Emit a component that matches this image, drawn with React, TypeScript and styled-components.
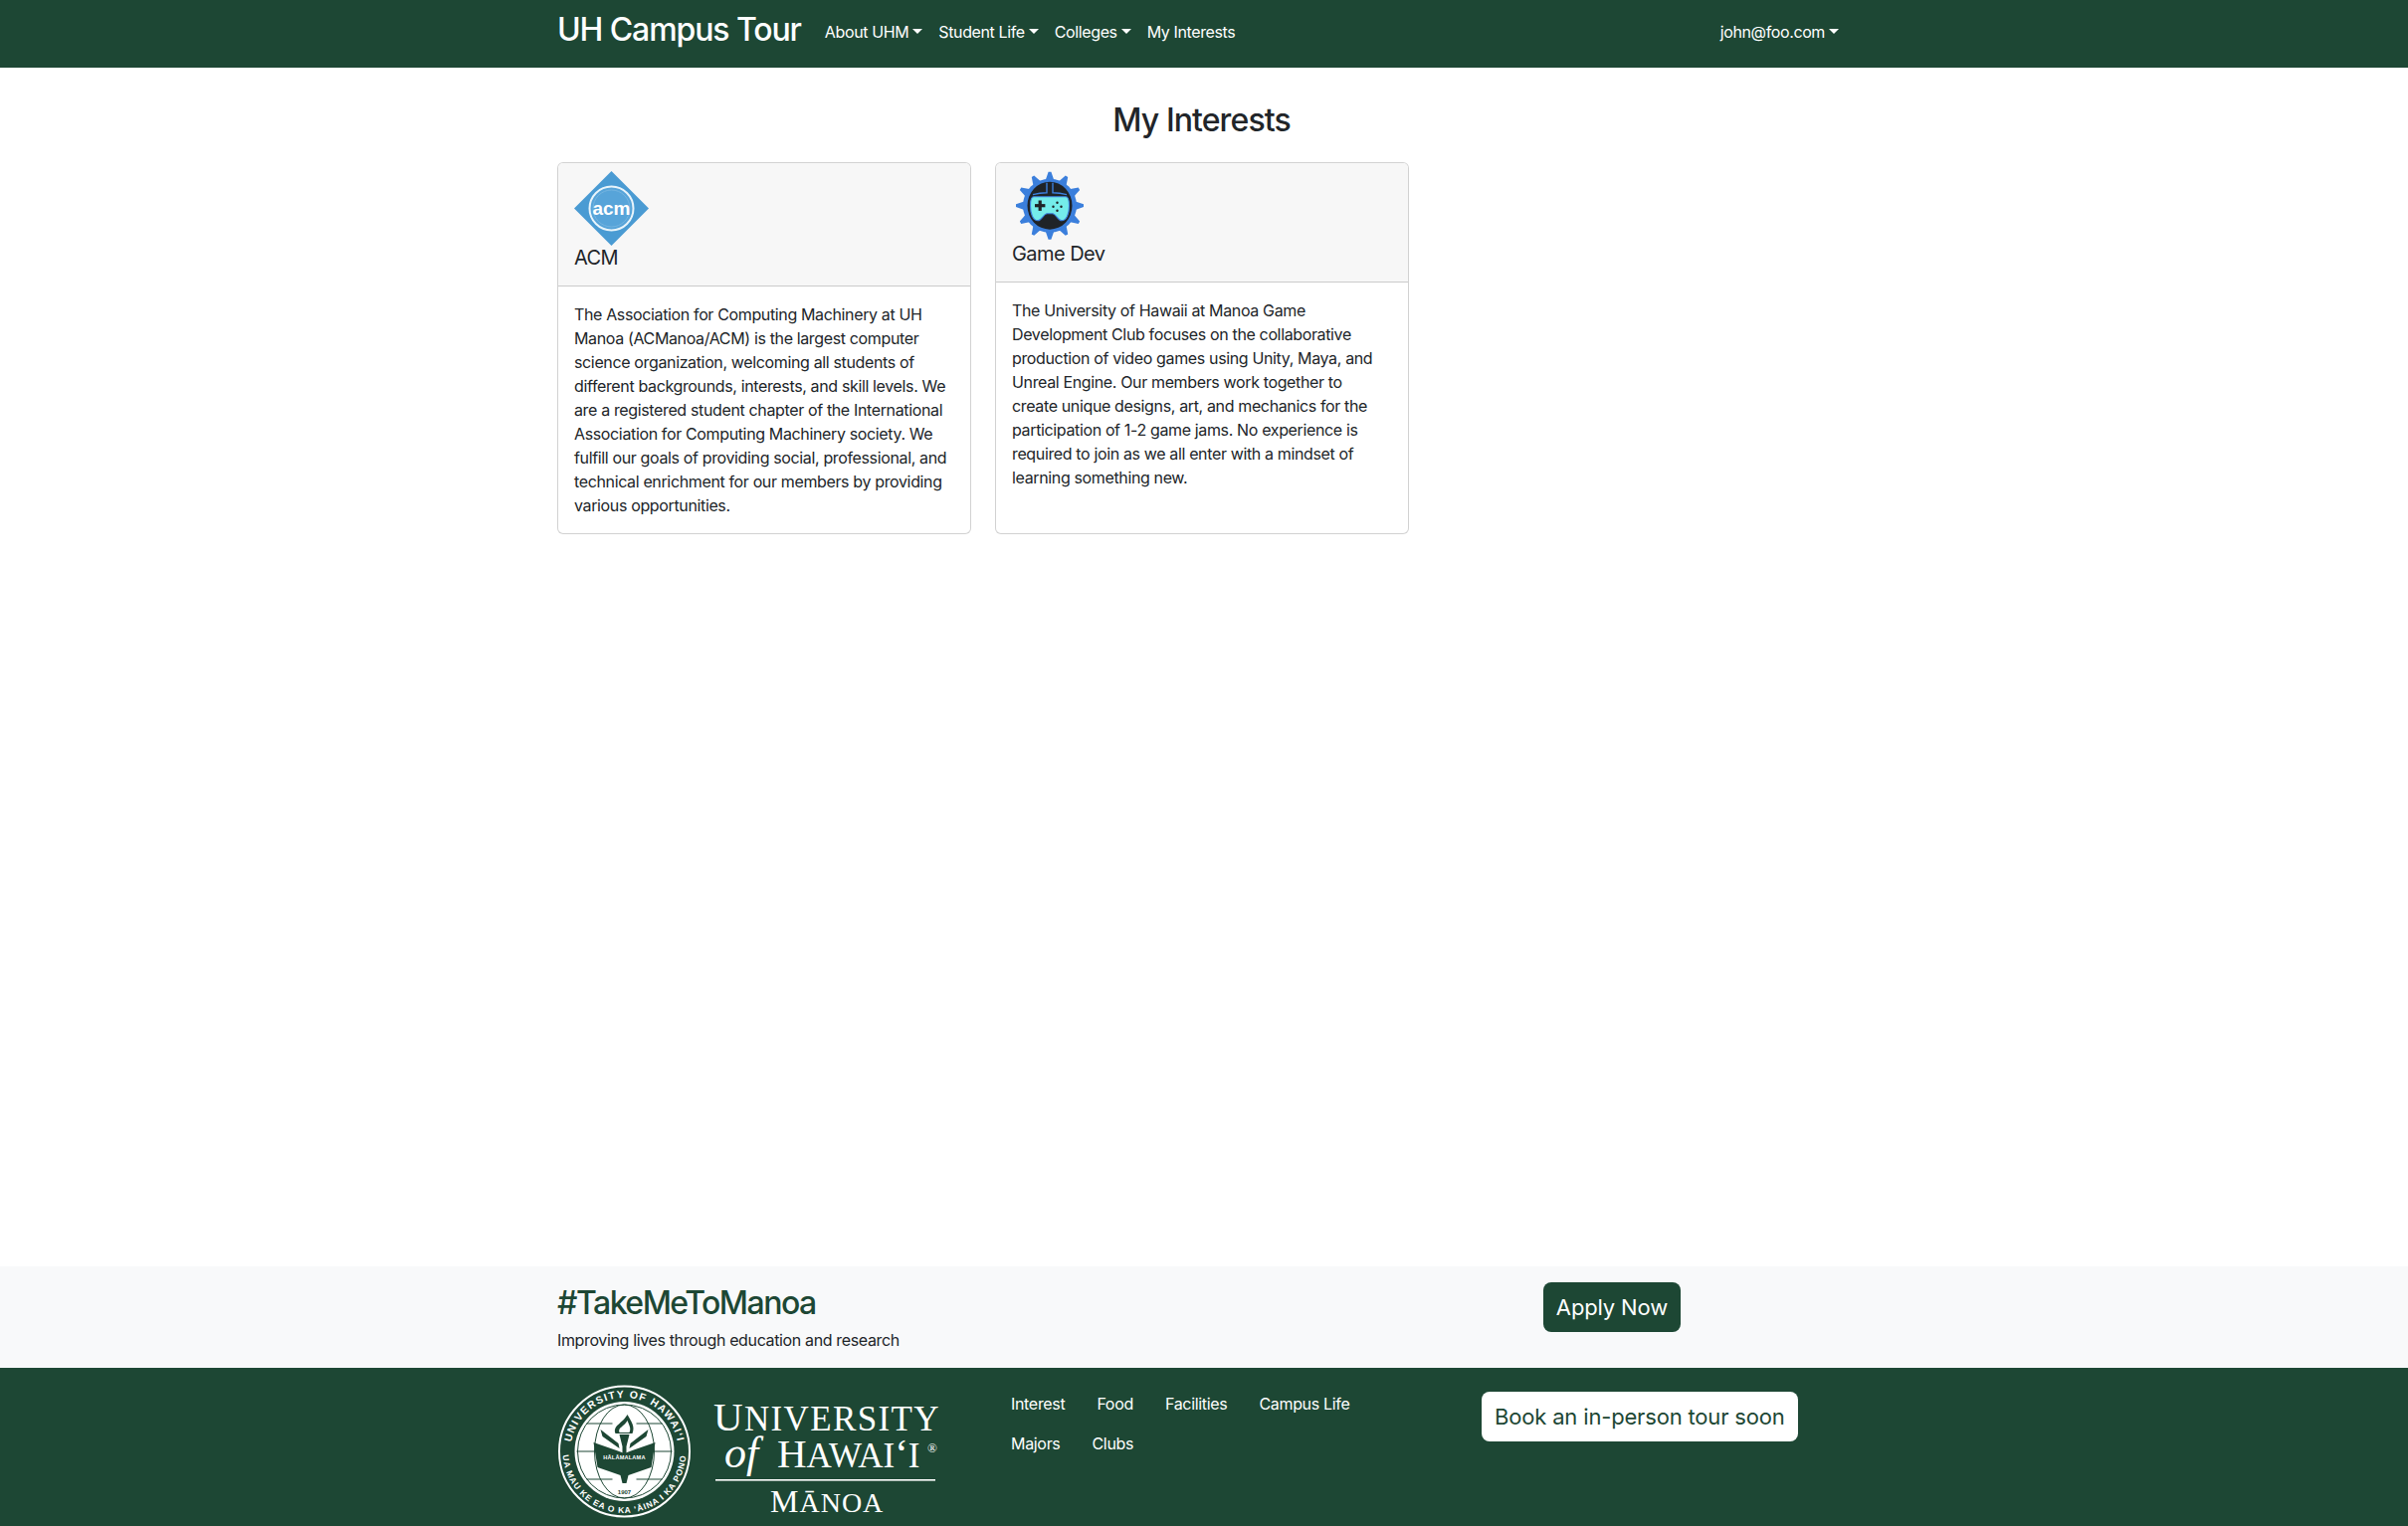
import React from 'react';
import styled, { createGlobalStyle } from 'styled-components';

const GREEN = '#1d4734';

const Global = createGlobalStyle`
  html, body { margin: 0; padding: 0; }
  body { font-family: Inter, "Liberation Sans", sans-serif; font-size: 16px; line-height: 24px; color: #212529; background: #fff; }
  * { box-sizing: border-box; }
`;

const Page = styled.div`
  min-height: 100vh;
  height: 1534px;
  overflow: hidden;
  display: flex;
  flex-direction: column;
`;

const Container = styled.div`
  width: 1320px;
  margin: 0 auto;
  padding: 0 10px;
`;

const Navbar = styled.nav`
  background: ${GREEN};
  height: 68px;
  flex: none;
`;

const NavInner = styled(Container)`
  display: flex;
  align-items: flex-start;
`;

const Brand = styled.a`
  font-size: 32px;
  line-height: 38px;
  margin-top: 11px;
  font-weight: 500;
  letter-spacing: -1.1px;
  color: #fff;
  margin-right: 16px;
  white-space: nowrap;
`;

const NavList = styled.div`
  display: flex;
  flex: 1;
  padding-top: 20px;
  padding-right: 4px;
`;

const NavLink = styled.a<{ $push?: boolean }>`
  display: inline-flex;
  align-items: center;
  font-size: 16px;
  line-height: 24px;
  letter-spacing: -0.38px;
  color: #fff;
  padding: 0 8px;
  white-space: nowrap;
  margin-left: ${(p) => (p.$push ? 'auto' : '0')};
`;

const Caret = styled.span`
  display: inline-block;
  margin-left: 4px;
  margin-bottom: 2px;
  border-top: 5px solid #fff;
  border-left: 5px solid transparent;
  border-right: 5px solid transparent;
`;

const Main = styled.main`
  flex: 1;
`;

const Heading = styled.h2`
  margin: 0 5px 0 0;
  padding-top: 34px;
  height: 95px;
  text-align: center;
  font-size: 32px;
  line-height: 38px;
  font-weight: 500;
  letter-spacing: -0.9px;
  color: #212529;
`;

const CardGrid = styled.div`
  display: grid;
  grid-template-columns: 416px 416px;
  gap: 24px;
  align-items: stretch;
`;

const Card = styled.article`
  border: 1px solid rgba(0, 0, 0, 0.175);
  border-radius: 6px;
  background: #fff;
  overflow: hidden;
  height: 374px;
`;

const CardHeader = styled.header`
  background: #f7f7f7;
  border-bottom: 1px solid rgba(0, 0, 0, 0.175);
  padding: 8px 16px;
`;

const LogoBox = styled.div<{ $h: number }>`
  width: 75px;
  height: ${(p) => p.$h}px;
  svg { display: block; }
`;

const CardTitle = styled.h5`
  margin: 0 0 8px;
  font-size: 20px;
  line-height: 24px;
  font-weight: 400;
  letter-spacing: -0.55px;
  color: #212529;
`;

const CardBody = styled.p`
  margin: 0;
  padding: 16px;
  font-size: 16px;
  line-height: 24px;
  letter-spacing: -0.36px;
  white-space: nowrap;
  color: #212529;
`;

const Band = styled.section`
  background: #f8f9fa;
  height: 102px;
  flex: none;
`;

const BandInner = styled(Container)`
  display: flex;
  justify-content: space-between;
  align-items: flex-start;
`;

const BandText = styled.div`
  padding-top: 18px;
`;

const Tag = styled.h2`
  margin: 0 0 6px;
  font-size: 32px;
  line-height: 38px;
  font-weight: 500;
  letter-spacing: -1.5px;
  color: ${GREEN};
`;

const Sub = styled.p`
  margin: 0;
  font-size: 16px;
  line-height: 24px;
  letter-spacing: -0.36px;
  color: #212529;
`;

const ApplyButton = styled.a`
  display: block;
  margin-top: 16px;
  margin-right: 171px;
  height: 50px;
  padding: 0 13px;
  line-height: 50px;
  font-size: 22px;
  letter-spacing: -0.15px;
  background: ${GREEN};
  color: #fff;
  border-radius: 8px;
  white-space: nowrap;
`;

const Footer = styled.footer`
  background: ${GREEN};
  flex: none;
  height: 159px;
`;

const FooterInner = styled(Container)`
  display: flex;
  align-items: flex-start;
`;

const LogoCol = styled.div`
  width: 430px;
  padding-top: 15px;
  svg { display: block; }
`;

const LinksCol = styled.div`
  width: 440px;
  padding-top: 24px;
  padding-left: 26px;
`;

const LinkRow = styled.div`
  display: flex;
  gap: 32px;
  height: 40px;
`;

const FooterLink = styled.a`
  font-size: 16px;
  line-height: 24px;
  letter-spacing: -0.32px;
  color: #fff;
  white-space: nowrap;
`;

const TourButton = styled.a`
  display: block;
  margin-top: 24px;
  margin-left: 59px;
  height: 50px;
  padding: 0 13px;
  line-height: 51px;
  font-size: 22px;
  letter-spacing: -0.17px;
  background: #fff;
  color: ${GREEN};
  border-radius: 8px;
  white-space: nowrap;
`;

const AcmLogo = () => (
  <svg width="75" height="75" viewBox="0 0 75 75">
    <polygon points="37.5,0 75,37.5 37.5,75 0,37.5" fill="#4a9bd3" />
    <circle cx="37.5" cy="37.5" r="22" fill="#57a4d9" stroke="#e8f4fb" strokeWidth="2" />
    <circle cx="37.5" cy="37.5" r="18.5" fill="none" stroke="#74b4e0" strokeWidth="1" />
    <text x="37.5" y="43.5" textAnchor="middle" fontFamily="'Liberation Sans', sans-serif" fontWeight="700" fontSize="19" fill="#fff">acm</text>
  </svg>
);

const teeth = Array.from({ length: 12 }, (_, i) => i * 30);

const GameLogo = () => (
  <svg width="75" height="71" viewBox="0 0 75 71">
    <g transform="translate(38 34.7)">
      {teeth.map((a) => (
        <polygon key={a} points="-4.5,-25 -1.4,-34 1.4,-34 4.5,-25" fill="#3b7fdc" transform={`rotate(${a})`} />
      ))}
      <circle r="27" fill="#3b7fdc" />
      <ellipse rx="22.5" ry="24" fill="#1f2327" />
      <path d="M-17,-11 C-10,-13 -6,-13 -3,-13 V-23 M3,-23 V-13 C6,-13 10,-13 17,-11" fill="none" stroke="#3b7fdc" strokeWidth="1.4" />
      <path d="M-16,-9 H16 C19,-9 19.5,-5 19.5,0 C19.5,8 17,15 12,15 C8,15 7,9 3,8 H-3 C-7,9 -8,15 -12,15 C-17,15 -19.5,8 -19.5,0 C-19.5,-5 -19,-9 -16,-9 Z" fill="#74ecea" stroke="#3b7fdc" strokeWidth="1.1" />
      <rect x="-15" y="-1.6" width="10.4" height="3.2" fill="#1f2327" />
      <rect x="-11.4" y="-5.2" width="3.2" height="10.4" fill="#1f2327" />
      <circle cx="3.5" cy="1" r="1.2" fill="#1f2327" />
      <circle cx="7.5" cy="-3" r="1.2" fill="#1f2327" />
      <circle cx="11.5" cy="1" r="1.2" fill="#1f2327" />
      <circle cx="7.5" cy="5" r="1.2" fill="#1f2327" />
    </g>
  </svg>
);

const UhLogo = () => (
  <svg width="385" height="140" viewBox="0 0 385 140">
    <defs>
      <path id="sealTop" d="M 13.5 69 A 54 54 0 0 1 121.5 69" fill="none" />
      <path id="sealBottom" d="M 5.5 69 A 62 62 0 0 0 129.5 69" fill="none" />
    </defs>
    <circle cx="67.5" cy="69" r="65.5" fill="none" stroke="#fff" strokeWidth="2" />
    <circle cx="67.5" cy="69" r="50" fill="#fff" />
    <text fontFamily="'Liberation Sans', sans-serif" fontWeight="700" fontSize="10.5" fill="#fff" letterSpacing="1.3">
      <textPath href="#sealTop" startOffset="50%" textAnchor="middle">UNIVERSITY OF HAWAI‘I</textPath>
    </text>
    <text fontFamily="'Liberation Sans', sans-serif" fontWeight="700" fontSize="8.5" fill="#fff" letterSpacing="0.9">
      <textPath href="#sealBottom" startOffset="50%" textAnchor="middle">UA MAU KE EA O KA ‘ĀINA I KA PONO</textPath>
    </text>
    <g transform="translate(67.5 69)" fill="none" stroke={GREEN} strokeWidth="1">
      <circle r="47" />
      <ellipse rx="30" ry="47" />
      <path d="M-38,-28 H-12 M12,-28 H38 M-48,0 H-30 M30,0 H48 M-38,28 H-12 M12,28 H38" />
      <path d="M-31,-9 L-8,-1 L0,2 L8,-1 L31,-9 L27,16 L4,24 L2,32 H-2 L-4,24 L-27,16 Z" fill={GREEN} stroke="none" />
      <path d="M-24,-22 L-6,-8 L-5,-3 L-22,-15 Z M24,-22 L6,-8 L5,-3 L22,-15 Z" fill={GREEN} stroke="none" />
      <path d="M-5,-17 H5 L2,-5 V2 H-2 V-5 Z" fill={GREEN} stroke="none" />
      <path d="M-9,-18 C-12,-26 -2,-28 3,-37 C7,-30 11,-25 8,-18 Z" fill={GREEN} stroke="none" />
      <path d="M-5,-19 C-7,-24 0,-25 3,-31 C5,-26 7,-23 5,-19 Z" fill="#fff" stroke="none" />
    </g>
    <text x="67.5" y="77" textAnchor="middle" fontFamily="'Liberation Sans', sans-serif" fontWeight="700" fontSize="5.6" letterSpacing="0.2" fill="#fff">HĀLĀMALAMA</text>
    <text x="67.5" y="112" textAnchor="middle" fontFamily="'Liberation Sans', sans-serif" fontWeight="700" fontSize="6" fill={GREEN}>1907</text>
    <g fontFamily="'Liberation Serif', serif" fill="#fff">
      <text x="157" y="48" fontSize="41" letterSpacing="1.35">U<tspan fontSize="35">NIVERSITY</tspan></text>
      <text x="168" y="85" fontSize="44" fontStyle="italic">of</text>
      <text x="221" y="85" fontSize="41" letterSpacing="0">H<tspan fontSize="35">AWAI</tspan>ʻ<tspan fontSize="35">I</tspan></text>
      <text x="372" y="70" fontSize="13">®</text>
      <text x="214" y="130" fontSize="32" letterSpacing="1">M<tspan fontSize="28">ĀNOA</tspan></text>
    </g>
    <rect x="159" y="97" width="221" height="1.6" fill="#fff" />
  </svg>
);

const acmLines = [
  'The Association for Computing Machinery at UH',
  'Manoa (ACManoa/ACM) is the largest computer',
  'science organization, welcoming all students of',
  'different backgrounds, interests, and skill levels. We',
  'are a registered student chapter of the International',
  'Association for Computing Machinery society. We',
  'fulfill our goals of providing social, professional, and',
  'technical enrichment for our members by providing',
  'various opportunities.',
];

const gameLines = [
  'The University of Hawaii at Manoa Game',
  'Development Club focuses on the collaborative',
  'production of video games using Unity, Maya, and',
  'Unreal Engine. Our members work together to',
  'create unique designs, art, and mechanics for the',
  'participation of 1-2 game jams. No experience is',
  'required to join as we all enter with a mindset of',
  'learning something new.',
];

const Lines = ({ lines }: { lines: string[] }) => (
  <>
    {lines.map((l) => (
      <React.Fragment key={l}>
        {l}
        <br />
      </React.Fragment>
    ))}
  </>
);

export default function App() {
  return (
    <Page>
      <Global />
      <Navbar>
        <NavInner>
          <Brand>UH Campus Tour</Brand>
          <NavList>
            <NavLink>About UHM<Caret /></NavLink>
            <NavLink>Student Life<Caret /></NavLink>
            <NavLink>Colleges<Caret /></NavLink>
            <NavLink>My Interests</NavLink>
            <NavLink $push>john@foo.com<Caret /></NavLink>
          </NavList>
        </NavInner>
      </Navbar>
      <Main>
        <Container>
          <Heading>My Interests</Heading>
          <CardGrid>
            <Card>
              <CardHeader>
                <LogoBox $h={75}><AcmLogo /></LogoBox>
                <CardTitle>ACM</CardTitle>
              </CardHeader>
              <CardBody><Lines lines={acmLines} /></CardBody>
            </Card>
            <Card>
              <CardHeader>
                <LogoBox $h={71}><GameLogo /></LogoBox>
                <CardTitle>Game Dev</CardTitle>
              </CardHeader>
              <CardBody><Lines lines={gameLines} /></CardBody>
            </Card>
          </CardGrid>
        </Container>
      </Main>
      <Band>
        <BandInner>
          <BandText>
            <Tag>#TakeMeToManoa</Tag>
            <Sub>Improving lives through education and research</Sub>
          </BandText>
          <ApplyButton>Apply Now</ApplyButton>
        </BandInner>
      </Band>
      <Footer>
        <FooterInner>
          <LogoCol><UhLogo /></LogoCol>
          <LinksCol>
            <LinkRow>
              <FooterLink>Interest</FooterLink>
              <FooterLink>Food</FooterLink>
              <FooterLink>Facilities</FooterLink>
              <FooterLink>Campus Life</FooterLink>
            </LinkRow>
            <LinkRow>
              <FooterLink>Majors</FooterLink>
              <FooterLink>Clubs</FooterLink>
            </LinkRow>
          </LinksCol>
          <TourButton>Book an in-person tour soon</TourButton>
        </FooterInner>
      </Footer>
    </Page>
  );
}
